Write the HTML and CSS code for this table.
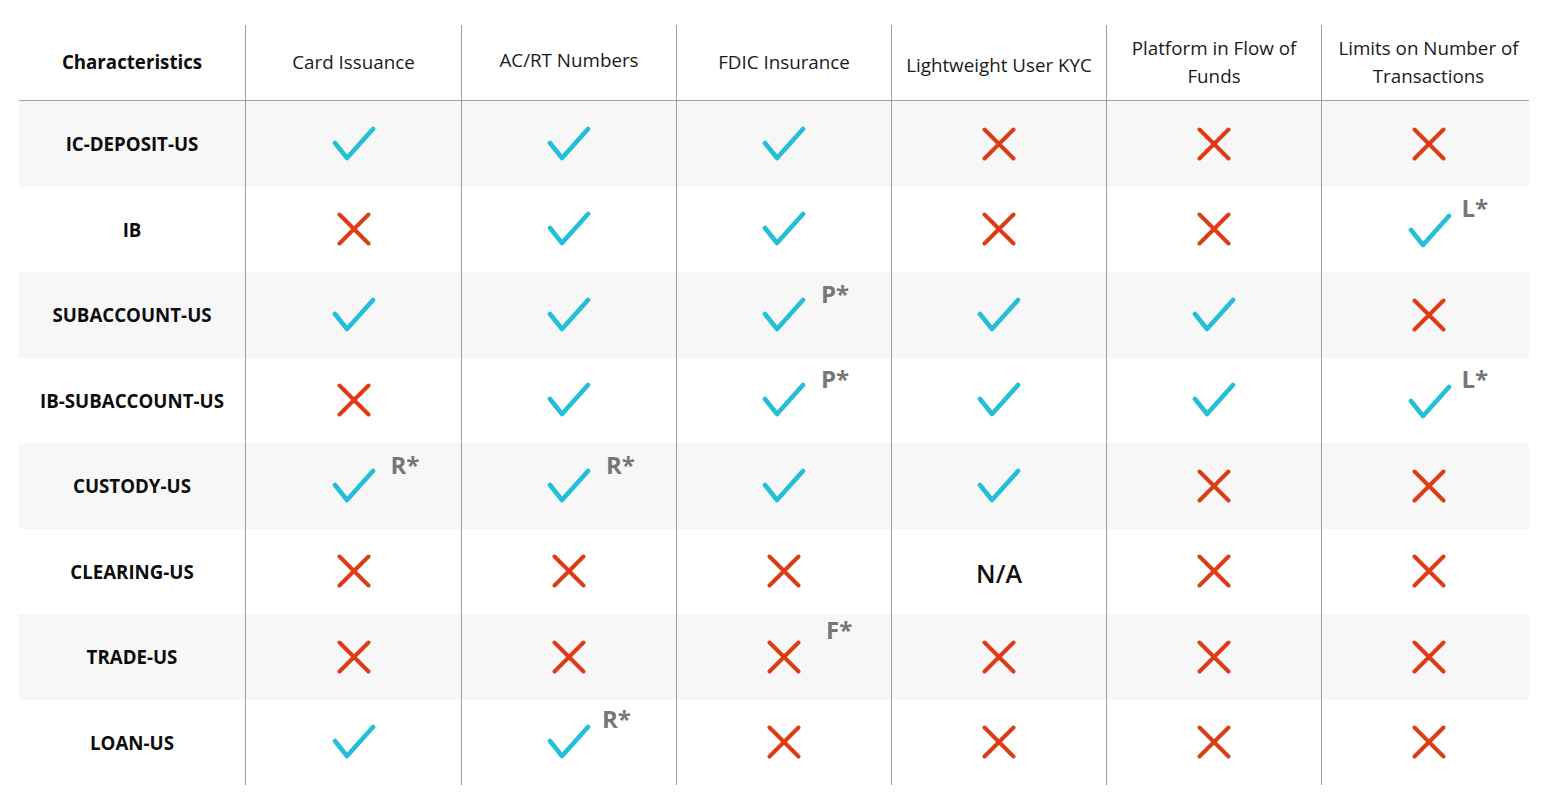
FILE: index.html
```html
<!DOCTYPE html>
<html lang="en">
<head>
<meta charset="utf-8">
<title>Characteristics</title>
<link rel="stylesheet" href="styles.css">
</head>
<body>
<svg width="0" height="0" class="defs" aria-hidden="true">
  <defs>
    <symbol id="ok" viewBox="0 0 44 36"><polyline points="3,17 15,32 41,3" fill="none" stroke="#22bfd6" stroke-width="4.6" stroke-linecap="round" stroke-linejoin="round"/></symbol>
    <symbol id="no" viewBox="0 0 34 34"><path d="M2.5 2.5 L31.5 31.5 M31.5 2.5 L2.5 31.5" fill="none" stroke="#dc3c16" stroke-width="4" stroke-linecap="round"/></symbol>
  </defs>
</svg>
<div class="wrap">
  <div class="grid">
    <div class="cell head label">Characteristics</div>
    <div class="cell head">Card Issuance</div>
    <div class="cell head up">AC/RT Numbers</div>
    <div class="cell head">FDIC Insurance</div>
    <div class="cell head down">Lightweight User KYC</div>
    <div class="cell head">Platform in Flow of<br>Funds</div>
    <div class="cell head">Limits on Number of<br>Transactions</div>

    <div class="cell label alt">IC-DEPOSIT-US</div>
    <div class="cell alt"><span class="mark"><svg class="ok"><use href="#ok"/></svg></span></div>
    <div class="cell alt"><span class="mark"><svg class="ok"><use href="#ok"/></svg></span></div>
    <div class="cell alt"><span class="mark"><svg class="ok"><use href="#ok"/></svg></span></div>
    <div class="cell alt"><span class="mark"><svg class="no"><use href="#no"/></svg></span></div>
    <div class="cell alt"><span class="mark"><svg class="no"><use href="#no"/></svg></span></div>
    <div class="cell alt"><span class="mark"><svg class="no"><use href="#no"/></svg></span></div>

    <div class="cell label">IB</div>
    <div class="cell"><span class="mark"><svg class="no"><use href="#no"/></svg></span></div>
    <div class="cell"><span class="mark"><svg class="ok"><use href="#ok"/></svg></span></div>
    <div class="cell"><span class="mark"><svg class="ok"><use href="#ok"/></svg></span></div>
    <div class="cell"><span class="mark"><svg class="no"><use href="#no"/></svg></span></div>
    <div class="cell"><span class="mark"><svg class="no"><use href="#no"/></svg></span></div>
    <div class="cell shift"><span class="mark"><svg class="ok"><use href="#ok"/></svg><span class="note near">L*</span></span></div>

    <div class="cell label alt">SUBACCOUNT-US</div>
    <div class="cell alt"><span class="mark"><svg class="ok"><use href="#ok"/></svg></span></div>
    <div class="cell alt"><span class="mark"><svg class="ok"><use href="#ok"/></svg></span></div>
    <div class="cell alt"><span class="mark"><svg class="ok"><use href="#ok"/></svg><span class="note">P*</span></span></div>
    <div class="cell alt"><span class="mark"><svg class="ok"><use href="#ok"/></svg></span></div>
    <div class="cell alt"><span class="mark"><svg class="ok"><use href="#ok"/></svg></span></div>
    <div class="cell alt"><span class="mark"><svg class="no"><use href="#no"/></svg></span></div>

    <div class="cell label">IB-SUBACCOUNT-US</div>
    <div class="cell"><span class="mark"><svg class="no"><use href="#no"/></svg></span></div>
    <div class="cell"><span class="mark"><svg class="ok"><use href="#ok"/></svg></span></div>
    <div class="cell"><span class="mark"><svg class="ok"><use href="#ok"/></svg><span class="note">P*</span></span></div>
    <div class="cell"><span class="mark"><svg class="ok"><use href="#ok"/></svg></span></div>
    <div class="cell"><span class="mark"><svg class="ok"><use href="#ok"/></svg></span></div>
    <div class="cell shift"><span class="mark"><svg class="ok"><use href="#ok"/></svg><span class="note near">L*</span></span></div>

    <div class="cell label alt">CUSTODY-US</div>
    <div class="cell alt"><span class="mark"><svg class="ok"><use href="#ok"/></svg><span class="note">R*</span></span></div>
    <div class="cell alt"><span class="mark"><svg class="ok"><use href="#ok"/></svg><span class="note">R*</span></span></div>
    <div class="cell alt"><span class="mark"><svg class="ok"><use href="#ok"/></svg></span></div>
    <div class="cell alt"><span class="mark"><svg class="ok"><use href="#ok"/></svg></span></div>
    <div class="cell alt"><span class="mark"><svg class="no"><use href="#no"/></svg></span></div>
    <div class="cell alt"><span class="mark"><svg class="no"><use href="#no"/></svg></span></div>

    <div class="cell label">CLEARING-US</div>
    <div class="cell"><span class="mark"><svg class="no"><use href="#no"/></svg></span></div>
    <div class="cell"><span class="mark"><svg class="no"><use href="#no"/></svg></span></div>
    <div class="cell"><span class="mark"><svg class="no"><use href="#no"/></svg></span></div>
    <div class="cell"><span class="na">N/A</span></div>
    <div class="cell"><span class="mark"><svg class="no"><use href="#no"/></svg></span></div>
    <div class="cell"><span class="mark"><svg class="no"><use href="#no"/></svg></span></div>

    <div class="cell label alt">TRADE-US</div>
    <div class="cell alt"><span class="mark"><svg class="no"><use href="#no"/></svg></span></div>
    <div class="cell alt"><span class="mark"><svg class="no"><use href="#no"/></svg></span></div>
    <div class="cell alt"><span class="mark"><svg class="no"><use href="#no"/></svg><span class="note far">F*</span></span></div>
    <div class="cell alt"><span class="mark"><svg class="no"><use href="#no"/></svg></span></div>
    <div class="cell alt"><span class="mark"><svg class="no"><use href="#no"/></svg></span></div>
    <div class="cell alt"><span class="mark"><svg class="no"><use href="#no"/></svg></span></div>

    <div class="cell label">LOAN-US</div>
    <div class="cell"><span class="mark"><svg class="ok"><use href="#ok"/></svg></span></div>
    <div class="cell"><span class="mark"><svg class="ok"><use href="#ok"/></svg><span class="note near loan">R*</span></span></div>
    <div class="cell"><span class="mark"><svg class="no"><use href="#no"/></svg></span></div>
    <div class="cell"><span class="mark"><svg class="no"><use href="#no"/></svg></span></div>
    <div class="cell"><span class="mark"><svg class="no"><use href="#no"/></svg></span></div>
    <div class="cell"><span class="mark"><svg class="no"><use href="#no"/></svg></span></div>
  </div>
</div>
</body>
</html>
```

FILE: styles.css
```css
* { box-sizing: border-box; }
html, body { margin: 0; padding: 0; background: #ffffff; }
body {
  font-family: "Open Sans", "Liberation Sans", sans-serif;
  color: #111111;
}
.defs { position: absolute; width: 0; height: 0; overflow: hidden; }
.wrap { padding: 25px 0 0 19px; }
.grid {
  display: grid;
  width: 1510px;
  grid-template-columns: 226px 216px 215px 215px 215px 215px 208px;
  grid-template-rows: 76px repeat(8, 85.5px);
}
.cell {
  display: flex;
  align-items: center;
  justify-content: center;
  text-align: center;
  border-left: 1px solid #a0a0a0;
}
.cell:nth-child(7n) { padding-left: 6px; }
.cell.label { border-left: none; font-weight: 700; font-size: 18.7px; color: #0d0d0d; }
.cell.alt { background: #f7f7f7; }
.head {
  font-size: 18.8px;
  line-height: 28px;
  font-weight: 400;
  color: #1a1a1a;
  border-bottom: 1px solid #a0a0a0;
  padding-bottom: 1px;
}
.head.up { padding-bottom: 5px; }
.head.down { padding-top: 5px; }
.mark { position: relative; display: inline-block; line-height: 0; }
.mark svg { display: block; }
svg.ok { width: 44px; height: 36px; }
svg.no { width: 34px; height: 34px; }
.cell.shift .mark { left: 1px; top: 2px; }
.note {
  position: absolute;
  left: calc(100% + 15px);
  top: -15px;
  font-size: 24px;
  line-height: 1;
  font-weight: 700;
  color: #777777;
  white-space: nowrap;
}
.note.near { left: calc(100% + 10px); top: -17px; }
.note.loan { left: calc(100% + 11px); }
.note.far { left: calc(100% + 25px); top: -22px; }
.na { font-size: 25px; font-weight: 600; color: #111111; padding-top: 4px; }
```
